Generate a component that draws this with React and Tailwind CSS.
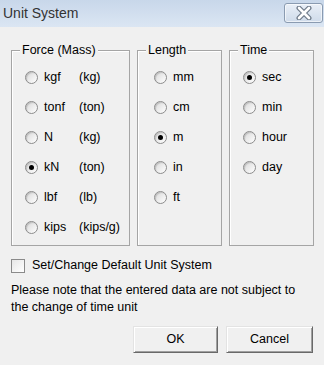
import React from "react";

const force = [
  { unit: "kgf", mass: "(kg)" },
  { unit: "tonf", mass: "(ton)" },
  { unit: "N", mass: "(kg)" },
  { unit: "kN", mass: "(ton)", checked: true },
  { unit: "lbf", mass: "(lb)" },
  { unit: "kips", mass: "(kips/g)" },
];

const lengths = [
  { unit: "mm" },
  { unit: "cm" },
  { unit: "m", checked: true },
  { unit: "in" },
  { unit: "ft" },
];

const times = [
  { unit: "sec", checked: true },
  { unit: "min" },
  { unit: "hour" },
  { unit: "day" },
];

const Radio = ({ checked }) => (
  <div className="w-[13px] h-[13px] rounded-full border border-[#8c8c8c] bg-gradient-to-br from-[#d8d8d8] to-white flex items-center justify-center shrink-0 shadow-[inset_1px_1px_1px_rgba(0,0,0,0.15)]">
    {checked && <div className="w-[5px] h-[5px] rounded-full bg-black" />}
  </div>
);

const GroupBox = ({ title, width, children }) => (
  <div
    className={`relative ${width} h-[196px] border border-[#a5a5a5] shadow-[inset_1px_1px_0_white] pt-[11px]`}
  >
    <div className="absolute -top-[9px] left-[8px] px-[2px] bg-[#f0f0f0] leading-[16px]">
      {title}
    </div>
    {children}
  </div>
);

const CloseButton = () => (
  <div className="w-[39px] h-[20px] rounded-[3px] border border-[#8a9bb1] bg-gradient-to-b from-[#e9eff7] to-[#cfdbea] flex items-center justify-center shadow-[inset_0_0_0_1px_rgba(255,255,255,0.6)]">
    <svg width="16" height="14" viewBox="0 0 16 14">
      <path
        d="M3 2 L13 12 M13 2 L3 12"
        stroke="#6f7b8a"
        strokeWidth="5"
        strokeLinecap="round"
      />
      <path
        d="M3 2 L13 12 M13 2 L3 12"
        stroke="white"
        strokeWidth="2.6"
        strokeLinecap="round"
      />
    </svg>
  </div>
);

const Button = ({ label, width }) => (
  <button
    type="button"
    className={`${width} h-[27px] bg-[#f0f0f0] border border-t-[#e3e3e3] border-l-[#e3e3e3] border-b-[#696969] border-r-[#696969] shadow-[inset_1px_1px_0_white,inset_-1px_-1px_0_#a0a0a0] text-black`}
  >
    {label}
  </button>
);

export default function App() {
  return (
    <div
      className="w-[324px] h-[365px] bg-[#f0f0f0] text-black text-[12.5px] flex flex-col"
      style={{ fontFamily: '"Liberation Sans", Arial, sans-serif' }}
    >
      <div className="h-[27px] bg-gradient-to-b from-[#c8d7ea] to-[#dbe6f3] flex items-start justify-between pl-[3px] pr-[1px]">
        <div className="text-[14px] text-[#333] leading-[27px]">Unit System</div>
        <div className="pt-[3px]">
          <CloseButton />
        </div>
      </div>

      <div className="flex pl-[11px] pt-[23px] gap-[7px]">
        <GroupBox title="Force (Mass)" width="w-[119px]">
          {force.map((r) => (
            <div key={r.unit} className="h-[30px] flex items-center pl-[13px]">
              <Radio checked={r.checked} />
              <span className="ml-[6px] w-[35px]">{r.unit}</span>
              <span>{r.mass}</span>
            </div>
          ))}
        </GroupBox>
        <GroupBox title="Length" width="w-[85px]">
          {lengths.map((r) => (
            <div key={r.unit} className="h-[30px] flex items-center pl-[16px]">
              <Radio checked={r.checked} />
              <span className="ml-[6px]">{r.unit}</span>
            </div>
          ))}
        </GroupBox>
        <GroupBox title="Time" width="w-[85px]">
          {times.map((r) => (
            <div key={r.unit} className="h-[30px] flex items-center pl-[13px]">
              <Radio checked={r.checked} />
              <span className="ml-[6px]">{r.unit}</span>
            </div>
          ))}
        </GroupBox>
      </div>

      <div className="flex items-center pl-[11px] mt-[12px] h-[15px]">
        <div className="w-[14px] h-[14px] border border-[#8a8a8a] bg-gradient-to-br from-[#e6e6e6] to-white shrink-0" />
        <span className="ml-[7px]">Set/Change Default Unit System</span>
      </div>

      <div className="pl-[11px] pr-[8px] mt-[9px] leading-[17px]">
        Please note that the entered data are not subject to
        <br />
        the change of time unit
      </div>

      <div className="flex justify-end gap-[8px] pr-[11px] mt-[10px]">
        <Button label="OK" width="w-[85px]" />
        <Button label="Cancel" width="w-[87px]" />
      </div>
    </div>
  );
}
